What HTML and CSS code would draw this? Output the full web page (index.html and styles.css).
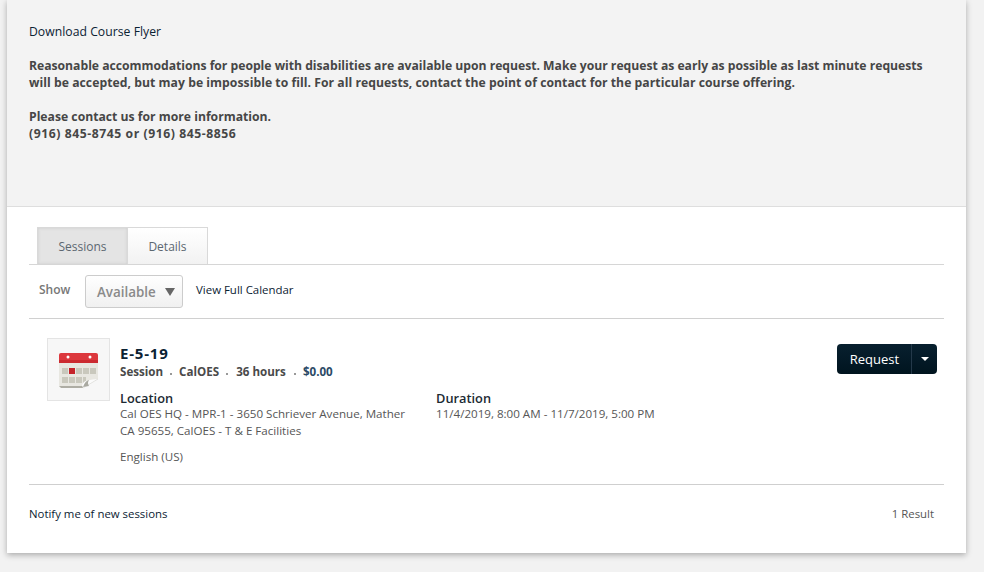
FILE: index.html
```html
<!DOCTYPE html>
<html lang="en">
<head>
<meta charset="utf-8">
<title>Course</title>
<link rel="stylesheet" href="styles.css">
</head>
<body>
<main class="card">
  <section class="summary">
    <p class="flyer"><a href="#">Download Course Flyer</a></p>
    <p class="strong"><span class="line-a">Reasonable accommodations for people with disabilities are available upon request. Make your request as early as possible as last minute requests</span><br><span class="line-b">will be accepted, but may be impossible to fill. For all requests, contact the point of contact for the particular course offering.</span></p>
    <p class="strong">Please contact us for more information.<br><span class="phone">(916) 845-8745 or (916) 845-8856</span></p>
  </section>
  <section class="content">
    <nav class="tabs">
      <a class="tab tab-active" href="#">Sessions</a>
      <a class="tab" href="#">Details</a>
    </nav>
    <div class="filter">
      <span class="show">Show</span>
      <button class="select">Available<span class="select-arrow"></span></button>
      <a class="calendar-link" href="#">View Full Calendar</a>
    </div>
    <article class="session">
      <div class="thumb">
        <svg width="40" height="38" viewBox="0 0 40 38">
          <path d="M0 12h39v16l-15 8H2q-2 0-2-2z" fill="#e8e7e1"/>
          <path d="M0 4q0-2 2-2h35q2 0 2 2v8H0z" fill="#dc383d"/>
          <rect x="0" y="9" width="39" height="3" fill="#cb2a30"/>
          <circle cx="9" cy="6" r="1.500" fill="#fff"/>
          <circle cx="31" cy="6" r="1.500" fill="#fff"/>
          <g fill="#c9c8bd">
            <rect x="3" y="17" width="6" height="6"/><rect x="17" y="17" width="6" height="6"/><rect x="24" y="17" width="6" height="6"/><rect x="31" y="17" width="6" height="6"/>
            <rect x="3" y="26" width="6" height="6"/><rect x="10" y="26" width="6" height="6"/><rect x="17" y="26" width="6" height="6"/><rect x="24" y="26" width="3" height="6"/>
            <rect x="10" y="17" width="6" height="6" fill="#c5232a"/>
          </g>
          <path d="M0 35h25l-1 2H2z" fill="#aeada4"/>
          <path d="M39 28L24 37l-1-3q1-2 2-3 2-2 14-3z" fill="#fbfbfb"/>
          <path d="M39 28L24 37" fill="none" stroke="#d5d5d0" stroke-width=".6"/>
          <path d="M30 29q-4 1-6 7l6-1q-2-3 0-6z" fill="#a9a9a1"/>
        </svg>
      </div>
      <div class="session-main">
        <h2 class="session-title">E-5-19</h2>
        <div class="meta">
          <span>Session</span><i class="dot"></i><span>CalOES</span><i class="dot"></i><span class="hours">36 hours</span><i class="dot"></i><span class="price">$0.00</span>
        </div>
        <div class="columns">
          <div class="col-location">
            <h3 class="label">Location</h3>
            <p class="value">Cal OES HQ - MPR-1 - 3650 Schriever Avenue, Mather CA 95655, CalOES - T &amp; E Facilities</p>
            <p class="value lang">English (US)</p>
          </div>
          <div class="col-duration">
            <h3 class="label">Duration</h3>
            <p class="value">11/4/2019, 8:00 AM - 11/7/2019, 5:00 PM</p>
          </div>
        </div>
      </div>
      <div class="request">
        <button class="req-main">Request</button><button class="req-caret"><span class="caret"></span></button>
      </div>
    </article>
    <footer class="foot">
      <a href="#">Notify me of new sessions</a>
      <span class="results">1 Result</span>
    </footer>
  </section>
</main>
</body>
</html>
```
FILE: styles.css
```css
* { box-sizing: border-box; }
html, body { height: 572px; overflow: hidden; }
body {
  margin: 0;
  background: #f2f2f2;
  font-family: "Open Sans", "Noto Sans", sans-serif;
  font-size: 11.600px;
  color: #565656;
}
a { color: #0b2233; text-decoration: none; }
p, h2, h3 { margin: 0; }
.card {
  margin: 0 18px 0 7px;
  height: 553px;
  background: #fff;
  box-shadow: 0 2px 6px rgba(0,0,0,.3);
  display: flex;
  flex-direction: column;
}
.summary {
  height: 207px;
  padding: 23px 22px 0;
  background: #f3f3f3;
  border-bottom: 1px solid #dedede;
}
.flyer { font-size: 12.200px; line-height: 17px; margin-bottom: 17px; letter-spacing: .03px; }
.strong {
  font-weight: 700;
  font-size: 12.200px;
  line-height: 17px;
  color: #464646;
  margin-bottom: 17px;
  white-space: nowrap;
}
.line-a { letter-spacing: -.02px; }
.line-b { letter-spacing: .04px; }
.phone { letter-spacing: .56px; }
.content { padding: 20px 22px 0; flex: 1; }
.tabs { display: flex; border-bottom: 1px solid #d6d6d6; height: 38px; }
.tab {
  height: 37px;
  display: flex;
  align-items: center;
  justify-content: center;
  border: 1px solid #d9d9d9;
  border-bottom: 0;
  color: #5c6770;
  font-size: 12px;
  background: linear-gradient(#fff, #f2f2f2);
}
.tabs .tab:first-child { margin-left: 8px; width: 91px; }
.tabs .tab:last-child { width: 80px; border-left: 0; }
.tabs .tab-active { background: #e4e4e4; box-shadow: inset 0 0 3px #ccc; }
.filter {
  height: 54px;
  display: flex;
  align-items: center;
  border-bottom: 1px solid #d0d0d0;
  padding-left: 10px;
}
.show { font-weight: 600; font-size: 12px; color: #777; width: 46px; margin-top: -4px; }
.select {
  width: 98px;
  height: 33px;
  padding: 0 0 0 11px;
  border: 1px solid #ccc;
  border-radius: 3px;
  background: linear-gradient(#fff, #f0f0f0);
  font: 600 13.400px "Open Sans", sans-serif;
  color: #8a8a8a;
  display: flex;
  align-items: center;
}
.select-arrow {
  margin-left: 9px;
  border: 5.500px solid transparent;
  border-top: 8px solid #666;
  border-bottom: 0;
}
.calendar-link { margin-left: 13px; margin-top: -4px; font-size: 11.450px; }
.session {
  height: 166px;
  display: flex;
  border-bottom: 1px solid #cfcfcf;
  padding: 19px 7px 0 18px;
}
.thumb {
  width: 63px;
  height: 63px;
  border: 1px solid #e4e4e4;
  background: #f7f7f7;
  display: flex;
  align-items: center;
  justify-content: center;
  flex: none;
}
.session-main { margin-left: 10px; flex: 1; }
.session-title { font-size: 15px; font-weight: 700; color: #0b2233; line-height: 20px; margin-top: 5px; letter-spacing: .8px; }
.meta { display: flex; align-items: center; font-weight: 700; font-size: 11.600px; color: #4a4a4a; line-height: 17px; margin-top: 0; }
.dot { width: 2px; height: 2px; background: #999; margin: 4px 7px 0; }
.hours { margin-left: 1px; margin-right: 1px; }
.price { color: #2b4a66; }
.columns { display: flex; margin-top: 10px; }
.col-location { width: 316px; }
.label { font-size: 12.800px; font-weight: 600; color: #1c2a33; line-height: 17px; }
.value { line-height: 16.500px; margin-top: -1px; width: 300px; }
.lang { margin-top: 10px; }
.request { display: flex; margin-top: 6px; height: 30px; }
.req-main, .req-caret {
  border: 0;
  background: linear-gradient(#08202f, #00141f);
  color: #fff;
  font: 13px "Open Sans", sans-serif;
  height: 30px;
}
.req-main { width: 75px; padding: 0 0 0 1px; border-radius: 4px 0 0 4px; border-right: 1px solid #24394a; }
.req-caret { width: 25px; border-radius: 0 4px 4px 0; display: flex; align-items: center; justify-content: center; }
.caret { border: 4px solid transparent; border-top: 4px solid #fff; border-bottom: 0; }
.foot { display: flex; justify-content: space-between; padding: 20px 10px 0 0; line-height: 17px; font-size: 11.400px; }
.results { font-size: 11.400px; }
```
